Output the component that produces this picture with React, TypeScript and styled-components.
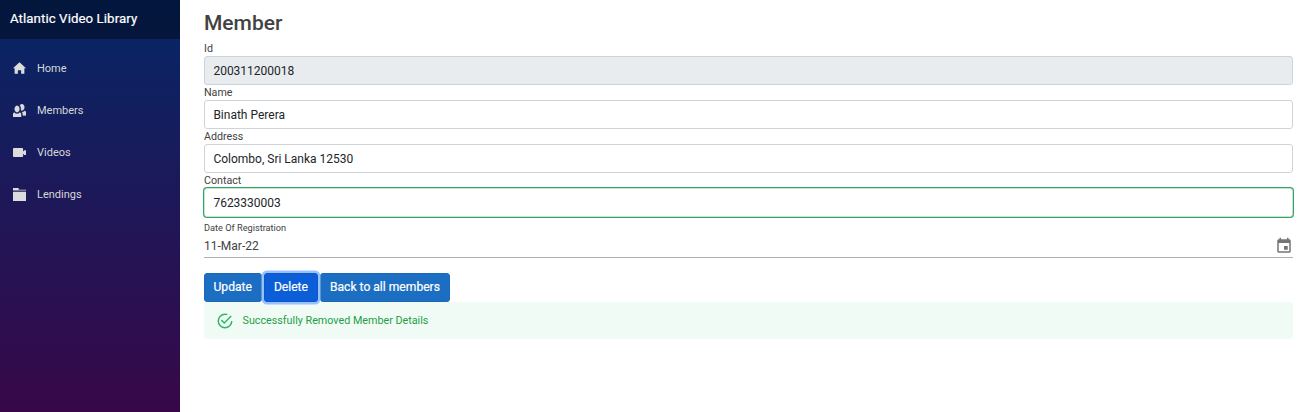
import React from "react";
import styled, { createGlobalStyle, css } from "styled-components";

const GlobalStyle = createGlobalStyle`
  *, *::before, *::after { box-sizing: border-box; }
  body { margin: 0; background: #fff; color: #424242; font: 400 12px/18px Roboto, "Liberation Sans", sans-serif; overflow: hidden; }
`;

const Page = styled.div`
  display: flex;
  height: 100vh;
`;

const Sidebar = styled.aside`
  width: 180px;
  flex: none;
  background: linear-gradient(180deg, #052767 0%, #3a0647 105%);
`;

const Brand = styled.div`
  height: 39px;
  padding: 0 10px;
  background: rgba(0, 0, 0, 0.4);
  color: #fff;
  font-size: 13.25px;
  font-weight: 400;
  letter-spacing: 0.08px;
  -webkit-text-stroke: 0.2px currentColor;
  line-height: 38px;
  white-space: nowrap;
`;

const Nav = styled.nav`
  display: flex;
  flex-direction: column;
  gap: 6px;
  padding: 12px 12px 0;
`;

const NavLink = styled.a`
  display: flex;
  align-items: center;
  height: 36px;
  color: #d7d7d7;
  font-size: 11px;
  line-height: 36px;
  svg { width: 13px; height: 13px; margin: 0 11px 2px 1px; fill: #dcdcdc; }
`;

const Main = styled.main`
  flex: 1;
  padding: 10px 14px 0 24px;
`;

const Title = styled.h1`
  margin: 0;
  height: 31px;
  font-size: 21px;
  font-weight: 500;
  line-height: 26px;
`;

const Label = styled.label`
  display: block;
  height: 15px;
  color: #424242;
  font-size: 10.7px;
  line-height: 15px;
`;

const Input = styled.input<{ $valid?: boolean }>`
  display: block;
  width: 100%;
  height: 29px;
  padding: 4.5px 8.4px;
  border: 1px solid #ced4da;
  border-radius: 3px;
  background: #fff;
  color: #212529;
  font: inherit;
  outline: none;
  &:disabled { background: #e9ecef; opacity: 1; }
  ${(p) => p.$valid && css`border-color: #c5e5d2; box-shadow: 0 0 0 1px #36a366;`}
`;

const DateField = styled.div`
  height: 41px;
  padding-top: 5px;
  border-bottom: 1px solid #b0b0b0;
`;

const DateLabel = styled.div`
  font-size: 9.2px;
  line-height: 12px;
`;

const DateRow = styled.div`
  display: flex;
  justify-content: space-between;
  align-items: center;
  height: 23px;
  svg { width: 18px; height: 18px; fill: #757575; }
`;

const Actions = styled.div`
  display: flex;
  gap: 2px;
  margin-top: 15px;
`;

const Button = styled.button<{ $focused?: boolean }>`
  height: 29px;
  padding: 0 9px 1px;
  border: 1px solid #1b69b8;
  border-radius: 3px;
  background: #1b6ec2;
  color: #fff;
  font: 400 12.1px/18px Roboto, "Liberation Sans", sans-serif;
  -webkit-text-stroke: 0.2px currentColor;
  white-space: nowrap;
  &:first-child { padding-left: 8.5px; }
  ${(p) => p.$focused && css`
    border-color: #0a58ca;
    background: #0b5ed7;
    box-shadow: 0 0 0 2.5px #98c1fe;
    z-index: 1;
  `}
`;

const Alert = styled.div`
  display: flex;
  align-items: center;
  height: 37px;
  padding: 0 12px;
  border-radius: 3px;
  background: #f1fbf6;
  color: #1c9f45;
  font-size: 10.75px;
  svg { width: 18px; height: 18px; margin-right: 8.5px; fill: #2fb765; }
`;

const links = [
  { text: "Home", path: <path d="M4 .200 0 3.800h1v3.500h2V5h2v2.300h2V3.800h1L4 .200Z" /> },
  { text: "Members", path: <path d="M5.500 0c-.510 0-.950.350-1.220.880.450.540.720 1.280.720 2.130 0 .290-.030.550-.090.810.190.110.380.190.590.190.830 0 1.500-.900 1.500-2s-.670-2-1.500-2zm-3 1c-.830 0-1.500.900-1.500 2s.670 2 1.500 2 1.500-.900 1.500-2-.670-2-1.500-2zm4.750 3.160c-.430.510-1.020.820-1.690.840.270.380.440.840.440 1.340v.660h2v-1.660c0-.520-.310-.970-.750-1.190zm-6.500 1c-.440.220-.750.670-.750 1.190v1.660h5v-1.660c0-.520-.310-.970-.750-1.190-.450.530-1.060.840-1.750.840s-1.300-.320-1.750-.840z" stroke="#dcdcdc" strokeWidth=".15" /> },
  { text: "Videos", path: <path d="M.500 1.300c-.280 0-.500.230-.500.500v4.500c0 .280.230.500.500.500h5.200c.280 0 .500-.220.500-.500V4.800l.800.800h1v-3H7l-.800.800V1.800c0-.280-.220-.500-.500-.500H.500z" /> },
  { text: "Lendings", path: <path d="M0 0v1.600h8V1H3.500V0H0zm0 2.300V8h8V2.300H0z" /> },
];

const fields = [
  { id: "id", label: "Id", value: "200311200018", disabled: true },
  { id: "name", label: "Name", value: "Binath Perera" },
  { id: "address", label: "Address", value: "Colombo, Sri Lanka 12530" },
  { id: "contact", label: "Contact", value: "7623330003", valid: true },
];

export default function App() {
  return (
    <Page>
      <GlobalStyle />
      <Sidebar>
        <Brand>Atlantic Video Library</Brand>
        <Nav>
          {links.map((l) => (
            <NavLink key={l.text}>
              <svg viewBox="0 0 8 8">{l.path}</svg>
              {l.text}
            </NavLink>
          ))}
        </Nav>
      </Sidebar>
      <Main>
        <Title>Member</Title>
        {fields.map((f) => (
          <div key={f.id}>
            <Label htmlFor={f.id}>{f.label}</Label>
            <Input id={f.id} defaultValue={f.value} disabled={f.disabled} $valid={f.valid} />
          </div>
        ))}
        <DateField>
          <DateLabel>Date Of Registration</DateLabel>
          <DateRow>
            11-Mar-22
            <svg viewBox="0 0 24 24">
              <path d="M17 12h-5v5h5v-5zM16 1v2H8V1H6v2H5c-1.110 0-1.990.900-1.990 2L3 19c0 1.100.890 2 2 2h14c1.100 0 2-.900 2-2V5c0-1.100-.900-2-2-2h-1V1h-2zm3 18H5V8h14v11z" />
            </svg>
          </DateRow>
        </DateField>
        <Actions>
          <Button>Update</Button>
          <Button $focused>Delete</Button>
          <Button>Back to all members</Button>
        </Actions>
        <Alert>
          <svg viewBox="0 0 24 24">
            <path d="M20 12a8 8 0 0 1-8 8 8 8 0 0 1-8-8 8 8 0 0 1 8-8c.760 0 1.500.110 2.200.310l1.570-1.570A9.822 9.822 0 0 0 12 2 10 10 0 0 0 2 12a10 10 0 0 0 10 10 10 10 0 0 0 10-10M7.910 10.080 6.500 11.500 11 16 21 6l-1.410-1.420L11 13.170l-3.090-3.090z" />
          </svg>
          Successfully Removed Member Details
        </Alert>
      </Main>
    </Page>
  );
}
